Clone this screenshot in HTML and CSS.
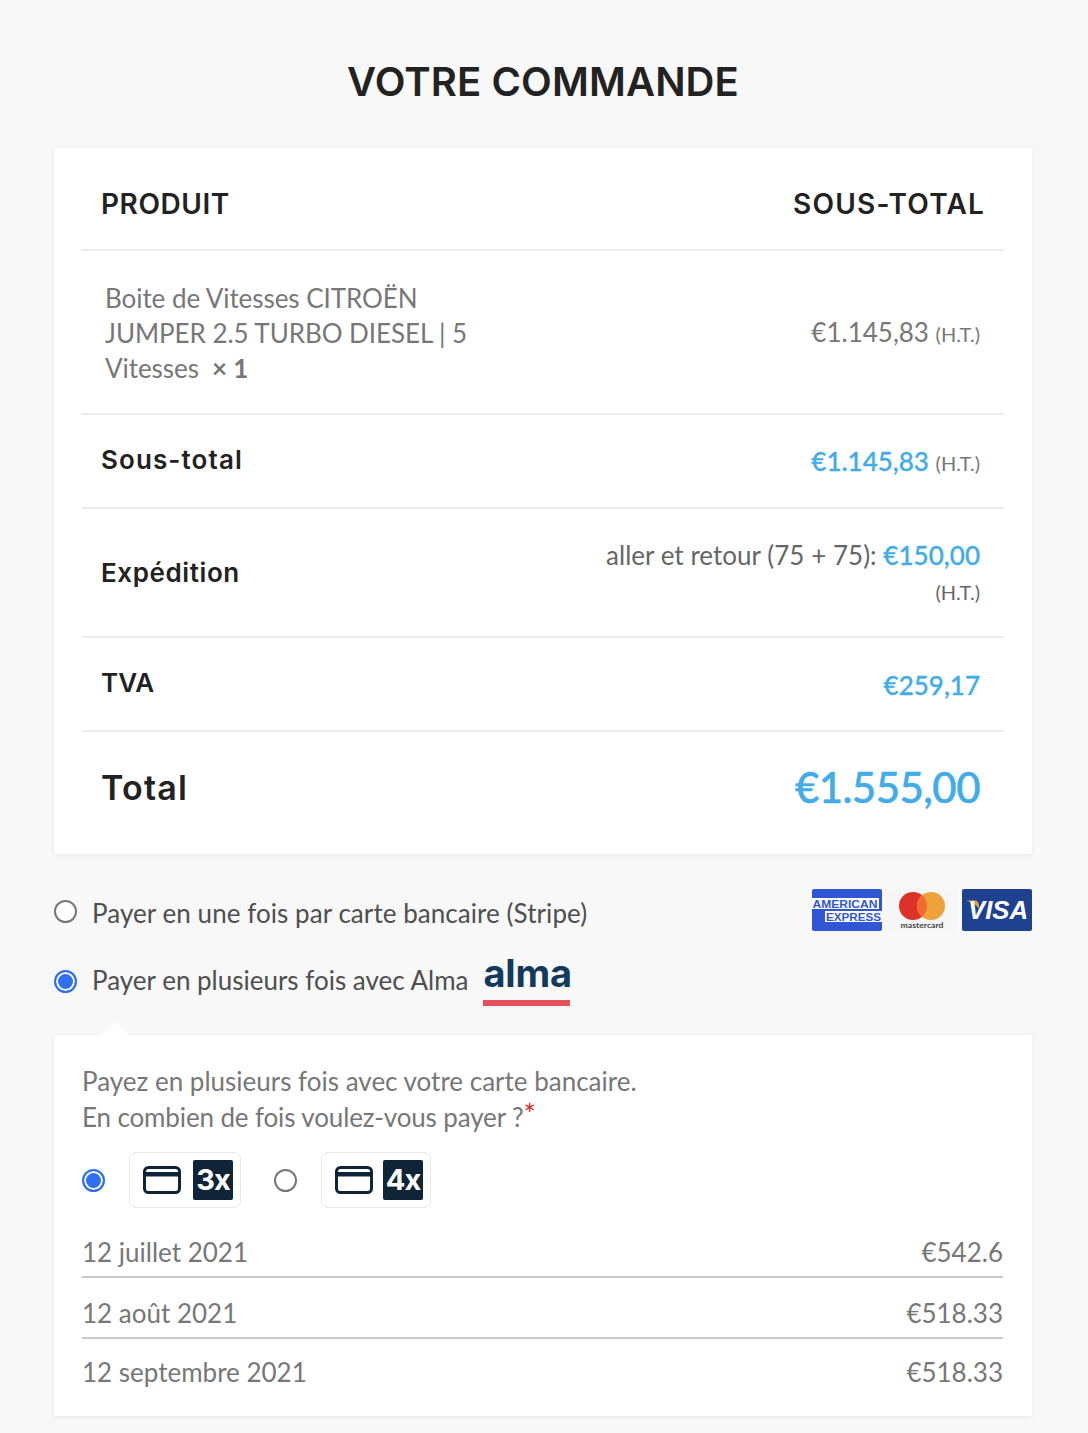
FILE: index.html
```html
<!DOCTYPE html>
<html lang="fr">
<head>
<meta charset="utf-8">
<title>Votre commande</title>
<link rel="stylesheet" href="styles.css">
</head>
<body>
<main class="page">
  <h1 class="title">VOTRE COMMANDE</h1>
  <section class="card summary">
    <div class="row row-head">
      <span class="label head-l">PRODUIT</span>
      <span class="label head-r">SOUS-TOTAL</span>
    </div>
    <div class="row row-product">
      <div class="product">Boite de Vitesses CITROËN<br>JUMPER 2.5 TURBO DIESEL | 5<br>Vitesses&nbsp; <strong class="qty">× 1</strong></div>
      <div class="value">€1.145,83 <small>(H.T.)</small></div>
    </div>
    <div class="row row-sub">
      <span class="label label-sm">Sous-total</span>
      <div class="value"><b class="blue">€1.145,83</b> <small>(H.T.)</small></div>
    </div>
    <div class="row row-ship">
      <span class="label label-sm label-ship">Expédition</span>
      <div class="value ship">aller et retour (75 + 75): <b class="blue">€150,00</b><br><small>(H.T.)</small></div>
    </div>
    <div class="row row-tva">
      <span class="label label-sm label-tva">TVA</span>
      <div class="value"><b class="blue">€259,17</b></div>
    </div>
    <div class="row row-total">
      <span class="label label-lg">Total</span>
      <b class="blue grand">€1.555,00</b>
    </div>
  </section>

  <div class="pay pay-stripe">
    <span class="radio"></span>
    <span class="pay-text">Payer en une fois par carte bancaire (Stripe)</span>
    <div class="cards">
      <svg class="cc" viewBox="0 0 70 42" aria-hidden="true">
        <rect width="70" height="42" rx="2" fill="#3056d3"/>
        <rect x="0" y="9" width="67" height="11" fill="#fff"/>
        <rect x="13" y="22" width="57" height="11" fill="#fff"/>
        <text x="0.5" y="18.500" class="amex" textLength="65" lengthAdjust="spacingAndGlyphs">AMERICAN</text>
        <text x="14" y="31.500" class="amex" textLength="55" lengthAdjust="spacingAndGlyphs">EXPRESS</text>
      </svg>
      <svg class="cc" viewBox="0 0 70 42" aria-hidden="true">
        <rect width="70" height="42" rx="2" fill="#f6f6f6"/>
        <circle cx="26" cy="17" r="14" fill="#dd3229"/>
        <circle cx="44" cy="17" r="14" fill="#eda33a"/>
        <path d="M35 6.100a14 14 0 0 1 0 21.800a14 14 0 0 1 0-21.800z" fill="#f26a2e"/>
        <text x="35" y="38.500" class="mc" text-anchor="middle" textLength="43" lengthAdjust="spacingAndGlyphs">mastercard</text>
      </svg>
      <svg class="cc" viewBox="0 0 70 42" aria-hidden="true">
        <rect width="70" height="42" rx="2" fill="#1f4290"/>
        <path d="M4 11.500h9c2 0 3 1 3.500 3l1.500 7c-2-4.500-7-8.500-14-10z" fill="#eda33a"/>
        <text x="36" y="30" class="visa" text-anchor="middle" textLength="60" lengthAdjust="spacingAndGlyphs">VISA</text>
      </svg>
    </div>
  </div>

  <div class="pay pay-alma">
    <span class="radio radio-on"></span>
    <span class="pay-text">Payer en plusieurs fois avec Alma</span>
    <span class="alma">alma</span>
  </div>

  <section class="card alma-box">
    <p class="intro">Payez en plusieurs fois avec votre carte bancaire.<br><span class="intro-ask">En combien de fois voulez-vous payer ?</span><span class="req">*</span></p>
    <div class="plans">
      <span class="radio radio-on"></span>
      <div class="plan">
        <svg class="plan-card" viewBox="0 0 38 28" aria-hidden="true">
          <rect x="1.500" y="1.500" width="35" height="25" rx="4" fill="#fff" stroke="#0f2537" stroke-width="3"/>
          <rect x="2" y="6" width="34" height="4.500" fill="#0f2537"/>
        </svg>
        <span class="badge">3x</span>
      </div>
      <span class="radio radio-gap"></span>
      <div class="plan plan-four">
        <svg class="plan-card" viewBox="0 0 38 28" aria-hidden="true">
          <rect x="1.500" y="1.500" width="35" height="25" rx="4" fill="#fff" stroke="#0f2537" stroke-width="3"/>
          <rect x="2" y="6" width="34" height="4.500" fill="#0f2537"/>
        </svg>
        <span class="badge">4x</span>
      </div>
    </div>
    <div class="sched sched-1"><span>12 juillet 2021</span><span>€542.6</span></div>
    <div class="sched sched-2"><span>12 août 2021</span><span>€518.33</span></div>
    <div class="sched sched-3"><span>12 septembre 2021</span><span>€518.33</span></div>
  </section>
</main>
</body>
</html>
```
FILE: styles.css
```css
* { box-sizing: border-box; }
html, body { margin: 0; padding: 0; }
body {
  background: #f8f8f8;
  font-family: "Lato", "Liberation Sans", sans-serif;
  color: #6f6f6f;
  font-size: 26px;
  overflow: hidden;
}
.page { width: 1088px; height: 1433px; padding: 0 56px 0 54px; }
.title {
  margin: 0;
  height: 148px;
  padding-top: 56px;
  font: 600 40px/52px "Inter", "Liberation Sans", sans-serif;
  letter-spacing: 0.1px;
  text-align: center;
  color: #222;
}
.card { background: #fff; box-shadow: 0 1px 4px rgba(0,0,0,.08); }
.summary { height: 706px; padding: 0 28px; }
.row {
  display: flex;
  justify-content: space-between;
  align-items: center;
  border-bottom: 2px solid #ececec;
  padding: 0 24px 0 19px;
}
.row-head { height: 103px; padding: 10px 19px 0; }
.row-product { height: 164px; padding-left: 23px; }
.row-sub { height: 94px; }
.row-ship { height: 129px; }
.row-tva { height: 94px; }
.row-total { height: 122px; border-bottom: 0; padding-bottom: 12px; }
.label { font-family: "Inter", "Liberation Sans", sans-serif; font-weight: 600; color: #222; }
.head-l { font-size: 28px; letter-spacing: 0.55px; }
.head-r { font-size: 28px; letter-spacing: 1.2px; }
.label-sm { font-size: 26px; letter-spacing: 1.1px; margin-bottom: 4px; }
.label-ship { letter-spacing: 0.6px; margin-bottom: 0; }
.label-tva { letter-spacing: 0; }
.label-lg { font-size: 34px; letter-spacing: 1.2px; }
.product { margin-top: 3px; line-height: 35.300px; color: #777; letter-spacing: -0.06px; }
.qty { font-weight: 700; color: #777; }
.value { text-align: right; color: #777; }
.value small { font-size: 20px; }
.row-tva .value { padding-top: 2px; }
.ship { padding-top: 2px; line-height: 35px; color: #666; letter-spacing: 0.03px; }
.blue { color: #42ace9; font-weight: 700; }
.value .blue { font-weight: 500; -webkit-text-stroke: .3px #42ace9; }
.grand { font-size: 42px; letter-spacing: -0.55px; font-weight: 500; -webkit-text-stroke: .5px #42ace9; }
.pay { display: flex; align-items: center; color: #4f4f4f; }
.pay-text { margin-left: 15px; letter-spacing: 0.06px; }
.pay-stripe { height: 70px; margin-top: 24px; }
.pay-alma { height: 67px; }
.pay-alma .pay-text { margin-top: -4px; letter-spacing: 0; }
.radio {
  flex: none;
  width: 23px;
  height: 23px;
  border-radius: 50%;
  border: 2px solid #777;
  background: #fff;
}
.radio-on {
  border-color: #2f6ff0;
  background: #2f6ff0;
  box-shadow: inset 0 0 0 2px #fff;
}
.pay-stripe .radio { margin-top: -3px; }
.cards { margin-left: auto; display: flex; gap: 5px; margin-top: -6px; }
.cc { width: 70px; height: 42px; display: block; }
.amex { font: 700 11px "Liberation Sans", sans-serif; fill: #3056d3; }
.mc { font: 700 8px "Lato", "Liberation Sans", sans-serif; fill: #444; }
.visa { font: italic 700 25px "Liberation Sans", sans-serif; fill: #fff; }
.alma {
  margin-left: 15px;
  margin-top: -7px;
  padding-bottom: 5px;
  font: 700 38px/44px "Inter", "Liberation Sans", sans-serif;
  letter-spacing: -0.2px;
  color: #133a5c;
  border-bottom: 6px solid #e8505b;
  width: 87px;
}
.alma-box {
  position: relative;
  height: 381px;
  margin-top: 20px;
  padding: 29px 29px 0 28px;
  color: #777;
}
.alma-box::before {
  content: "";
  position: absolute;
  left: 48px;
  top: -13px;
  border: 13px solid transparent;
  border-top: 0;
  border-bottom-color: #fff;
}
.intro { margin: 0; line-height: 35.500px; }
.intro-ask { letter-spacing: -0.13px; }
.req { color: #e0262b; position: relative; top: -2px; font-size: 29px; line-height: 0; }
.plans { display: flex; align-items: center; margin-top: 16px; height: 58px; }
.plan {
  display: flex;
  align-items: center;
  gap: 12px;
  width: 112px;
  height: 56px;
  margin-left: 24px;
  padding-left: 13px;
  background: #fff;
  border: 1px solid #e6e6e6;
  border-radius: 7px;
}
.plan-four { width: 110px; gap: 10px; }
.radio-gap { margin-left: 33px; }
.plan-card { width: 38px; height: 28px; flex: none; }
.badge {
  flex: none;
  width: 40px;
  height: 40px;
  border-radius: 2px;
  background: #0f2537;
  color: #fff;
  font: 700 29px/40px "Inter", "Liberation Sans", sans-serif;
  letter-spacing: -1px;
  text-align: center;
}
.sched { display: flex; justify-content: space-between; align-items: center; }
.sched-1 { height: 62px; padding-top: 12px; border-bottom: 2px solid #c9c9c9; margin-top: 7px; }
.sched-2 { height: 61px; padding-top: 10px; border-bottom: 2px solid #c9c9c9; }
.sched-3 { height: 58px; padding-top: 8px; }
```
